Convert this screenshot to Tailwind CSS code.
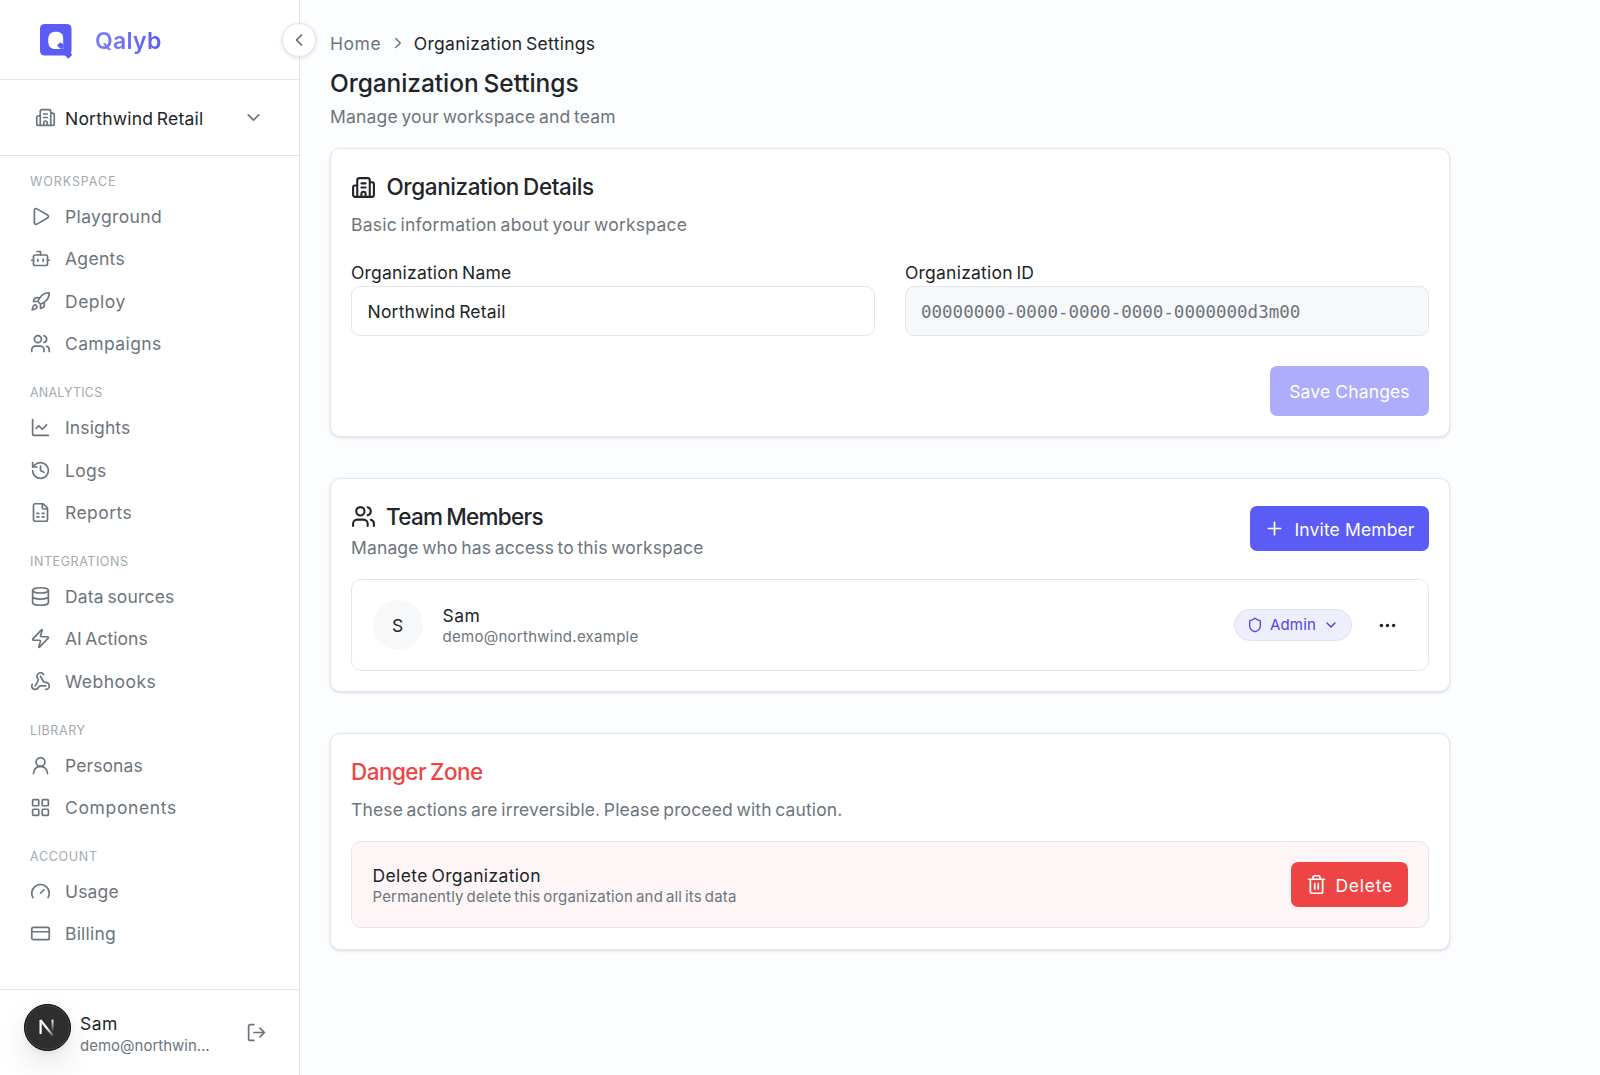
<!DOCTYPE html>
<html lang="en">
<head>
<meta charset="utf-8">
<title>Organization Settings</title>
<script src="https://cdn.jsdelivr.net/npm/@tailwindcss/browser@4"></script>
</head>
<body class="flex h-[1075px] overflow-hidden bg-[#fcfdfe] font-['Inter',sans-serif] text-[17.5px] leading-[26px] text-[#212529] [word-spacing:-1.5px]">

<!-- Sidebar -->
<aside class="relative flex w-[300px] shrink-0 flex-col border-r border-[#e4e6ee] bg-white">
  <div class="flex h-[80px] shrink-0 items-center border-b border-[#e4e6ee] pl-[39.5px]">
    <svg class="mt-[4px] h-[35px] w-[33px]" viewBox="0 0 33 35">
      <rect x="0" y="0" width="31.5" height="31.5" rx="4.5" fill="#5b5bf6"/>
      <path d="M15.700 7.700c5.200 0 7.500 2 7.500 7v10.300h-7.700c-5 0-7.300-2.600-7.300-8.500s2.300-8.800 7.500-8.800z" fill="#fff"/>
      <path d="M20.200 18.200l1.500 1.200 1.500.2v3.400l-1.200 2.500-1.800-1-3.200-3z" fill="#5b5bf6"/>
      <path d="M28.300 27.200l4 3.600-4 3.900-4-3.900z" fill="#5b5bf6"/>
    </svg>
    <span class="ml-[22.5px] mt-[2px] bg-gradient-to-r from-[#7d7df9] to-[#5b5bf6] bg-clip-text text-[23px] font-semibold leading-[32px] tracking-[0.3px] text-transparent">Qalyb</span>
    <button class="absolute left-[282px] top-[23px] flex size-[34px] items-center justify-center rounded-full border border-[#e4e6ee] bg-white pr-px text-[#5f6870] shadow-[0_1px_4px_rgba(0,0,0,0.14)]">
      <svg class="size-[20px] shrink-0" viewBox="0 0 24 24" fill="none" stroke="currentColor" stroke-width="2" stroke-linecap="round" stroke-linejoin="round"><path d="m15 18-6-6 6-6"/></svg>
    </button>
  </div>

  <div class="flex h-[76px] shrink-0 items-center border-b border-[#e4e6ee] pl-[34.5px] pr-[35px]">
    <svg class="size-[21px] text-[#6c757d]" viewBox="0 0 24 24" fill="none" stroke="currentColor" stroke-width="1.95" stroke-linecap="round" stroke-linejoin="round"><path d="M10 12h4M10 8h4M14 21v-3a2 2 0 0 0-4 0v3M6 10H4a2 2 0 0 0-2 2v7a2 2 0 0 0 2 2h16a2 2 0 0 0 2-2V9a2 2 0 0 0-2-2h-2M6 21V5a2 2 0 0 1 2-2h8a2 2 0 0 1 2 2v16"/></svg>
    <span class="ml-[9.5px] pt-[2px] tracking-[0.22px]">Northwind Retail</span>
    <svg class="ml-auto size-[21px] text-[#6c757d]" viewBox="0 0 24 24" fill="none" stroke="currentColor" stroke-width="1.95" stroke-linecap="round" stroke-linejoin="round"><path d="m6 9 6 6 6-6"/></svg>
  </div>

  <nav class="flex grow flex-col gap-[17px] pl-[29.5px] pt-[15px] text-[#6c757d]">
    <section>
      <h2 class="mb-[3.2px] pl-[0.5px] pt-px text-[12.5px] leading-[20px] tracking-[0.92px] text-[#a3a9af]">WORKSPACE</h2>
      <a class="flex h-[42.5px] items-center gap-[14.5px]"><svg class="size-[21px]" viewBox="0 0 24 24" fill="none" stroke="currentColor" stroke-width="1.95" stroke-linecap="round" stroke-linejoin="round"><path d="M5 5a2 2 0 0 1 3.008-1.728l11.997 6.998a2 2 0 0 1 .003 3.458l-12 7A2 2 0 0 1 5 19z"/></svg><span class="pt-px tracking-[0.37px]">Playground</span></a>
      <a class="flex h-[42.5px] items-center gap-[14.5px]"><svg class="size-[21px]" viewBox="0 0 24 24" fill="none" stroke="currentColor" stroke-width="1.95" stroke-linecap="round" stroke-linejoin="round"><path d="M12 8V4H8"/><rect width="16" height="12" x="4" y="8" rx="2"/><path d="M2 14h2M20 14h2M15 13v2M9 13v2"/></svg><span class="pt-px tracking-[0.3px]">Agents</span></a>
      <a class="flex h-[42.5px] items-center gap-[14.5px]"><svg class="size-[21px]" viewBox="0 0 24 24" fill="none" stroke="currentColor" stroke-width="1.95" stroke-linecap="round" stroke-linejoin="round"><path d="M4.5 16.5c-1.5 1.26-2 5-2 5s3.74-.5 5-2c.71-.84.7-2.13-.09-2.91a2.18 2.18 0 0 0-2.91-.09zM12 15l-3-3a22 22 0 0 1 2-3.95A12.88 12.88 0 0 1 22 2c0 2.72-.78 7.5-6 11a22.35 22.35 0 0 1-4 2zM9 12H4s.55-3.03 2-4c1.62-1.08 5 0 5 0M12 15v5s3.03-.55 4-2c1.08-1.62 0-5 0-5"/></svg><span class="pt-px tracking-[0.5px]">Deploy</span></a>
      <a class="flex h-[42.5px] items-center gap-[14.5px]"><svg class="size-[21px]" viewBox="0 0 24 24" fill="none" stroke="currentColor" stroke-width="1.95" stroke-linecap="round" stroke-linejoin="round"><path d="M16 21v-2a4 4 0 0 0-4-4H6a4 4 0 0 0-4 4v2M22 21v-2a4 4 0 0 0-3-3.87M16 3.13a4 4 0 0 1 0 7.75"/><circle cx="9" cy="7" r="4"/></svg><span class="pt-px tracking-[0.38px]">Campaigns</span></a>
    </section>
    <section>
      <h2 class="mb-[3.2px] pl-[0.5px] pt-px text-[12.5px] leading-[20px] tracking-[0.2px] text-[#a3a9af]">ANALYTICS</h2>
      <a class="flex h-[42.5px] items-center gap-[14.5px]"><svg class="size-[21px]" viewBox="0 0 24 24" fill="none" stroke="currentColor" stroke-width="1.95" stroke-linecap="round" stroke-linejoin="round"><path d="M3 3v16a2 2 0 0 0 2 2h16M19 9l-5 5-4-4-3 3"/></svg><span class="pt-px tracking-[0.13px]">Insights</span></a>
      <a class="flex h-[42.5px] items-center gap-[14.5px]"><svg class="size-[21px]" viewBox="0 0 24 24" fill="none" stroke="currentColor" stroke-width="1.95" stroke-linecap="round" stroke-linejoin="round"><path d="M3 12a9 9 0 1 0 9-9 9.75 9.75 0 0 0-6.74 2.74L3 8M3 3v5h5M12 7v5l4 2"/></svg><span class="pt-px tracking-[0.3px]">Logs</span></a>
      <a class="flex h-[42.5px] items-center gap-[14.5px]"><svg class="size-[21px]" viewBox="0 0 24 24" fill="none" stroke="currentColor" stroke-width="1.95" stroke-linecap="round" stroke-linejoin="round"><path d="M15 2H6a2 2 0 0 0-2 2v16a2 2 0 0 0 2 2h12a2 2 0 0 0 2-2V7zM14 2v4a2 2 0 0 0 2 2h4M8 13h2M14 13h2M8 17h2M14 17h2"/></svg><span class="pt-px tracking-[0.45px]">Reports</span></a>
    </section>
    <section>
      <h2 class="mb-[3.2px] pl-[0.5px] pt-px text-[12.5px] leading-[20px] tracking-[0.57px] text-[#a3a9af]">INTEGRATIONS</h2>
      <a class="flex h-[42.5px] items-center gap-[14.5px]"><svg class="size-[21px]" viewBox="0 0 24 24" fill="none" stroke="currentColor" stroke-width="1.95" stroke-linecap="round" stroke-linejoin="round"><ellipse cx="12" cy="5" rx="9" ry="3"/><path d="M3 5v14a9 3 0 0 0 18 0V5M3 12a9 3 0 0 0 18 0"/></svg><span class="pt-px tracking-[0.18px]">Data sources</span></a>
      <a class="flex h-[42.5px] items-center gap-[14.5px]"><svg class="size-[21px]" viewBox="0 0 24 24" fill="none" stroke="currentColor" stroke-width="1.95" stroke-linecap="round" stroke-linejoin="round"><path d="M4 14a1 1 0 0 1-.78-1.63l9.9-10.2a.5.5 0 0 1 .86.46l-1.92 6.02A1 1 0 0 0 13 10h7a1 1 0 0 1 .78 1.63l-9.9 10.2a.5.5 0 0 1-.86-.46l1.92-6.02A1 1 0 0 0 11 14z"/></svg><span class="pt-px tracking-[0.05px]">AI Actions</span></a>
      <a class="flex h-[42.5px] items-center gap-[14.5px]"><svg class="size-[21px]" viewBox="0 0 24 24" fill="none" stroke="currentColor" stroke-width="1.95" stroke-linecap="round" stroke-linejoin="round"><path d="M18 16.98h-5.99c-1.1 0-1.95.94-2.48 1.9A4 4 0 0 1 2 17c.01-.7.2-1.4.57-2M6 17l3.13-5.78c.53-.97.1-2.18-.5-3.1a4 4 0 1 1 6.89-4.06M12 6l3.13 5.73C15.66 12.7 16.9 13 18 13a4 4 0 0 1 0 8"/></svg><span class="pt-px tracking-[0.47px]">Webhooks</span></a>
    </section>
    <section>
      <h2 class="mb-[3.2px] pl-[0.5px] pt-px text-[12.5px] leading-[20px] tracking-[0.58px] text-[#a3a9af]">LIBRARY</h2>
      <a class="flex h-[42.5px] items-center gap-[14.5px]"><svg class="size-[21px]" viewBox="0 0 24 24" fill="none" stroke="currentColor" stroke-width="1.95" stroke-linecap="round" stroke-linejoin="round"><circle cx="12" cy="8" r="5"/><path d="M20 21a8 8 0 0 0-16 0"/></svg><span class="pt-px tracking-[0.1px]">Personas</span></a>
      <a class="flex h-[42.5px] items-center gap-[14.5px]"><svg class="size-[21px]" viewBox="0 0 24 24" fill="none" stroke="currentColor" stroke-width="1.95" stroke-linecap="round" stroke-linejoin="round"><rect width="7" height="7" x="3" y="3" rx="1"/><rect width="7" height="7" x="14" y="3" rx="1"/><rect width="7" height="7" x="14" y="14" rx="1"/><rect width="7" height="7" x="3" y="14" rx="1"/></svg><span class="pt-px tracking-[0.64px]">Components</span></a>
    </section>
    <section>
      <h2 class="mb-[3.2px] pl-[0.5px] pt-px text-[12.5px] leading-[20px] tracking-[0.71px] text-[#a3a9af]">ACCOUNT</h2>
      <a class="flex h-[42.5px] items-center gap-[14.5px]"><svg class="size-[21px]" viewBox="0 0 24 24" fill="none" stroke="currentColor" stroke-width="1.95" stroke-linecap="round" stroke-linejoin="round"><path d="m12 14 4-4M3.34 19a10 10 0 1 1 17.32 0"/></svg><span class="pt-px tracking-[0.17px]">Usage</span></a>
      <a class="flex h-[42.5px] items-center gap-[14.5px]"><svg class="size-[21px]" viewBox="0 0 24 24" fill="none" stroke="currentColor" stroke-width="1.95" stroke-linecap="round" stroke-linejoin="round"><rect width="20" height="14" x="2" y="5" rx="2"/><path d="M2 10h20"/></svg><span class="pt-px tracking-[0.21px]">Billing</span></a>
    </section>
  </nav>

  <div class="flex h-[86px] shrink-0 items-start border-t border-[#e4e6ee] pl-[23.5px] pr-[32px] pt-[13.5px]">
    <div class="flex size-[47.5px] shrink-0 items-center justify-center rounded-full border border-black bg-[#2e2e2e] shadow-[inset_0_0_0_1px_#484848,0_14px_28px_4px_rgba(0,0,0,0.07),0_3px_6px_rgba(0,0,0,0.06)]">
      <svg class="size-[18px]" viewBox="0 0 18 18" fill="none" stroke-width="2.2">
        <defs>
          <linearGradient id="stem" x1="0" y1="0" x2="0" y2="1"><stop offset="0" stop-color="#fff"/><stop offset="1" stop-color="#fff" stop-opacity="0.1"/></linearGradient>
          <linearGradient id="slash" gradientUnits="userSpaceOnUse" x1="9" y1="10" x2="15" y2="18"><stop offset="0" stop-color="#fff"/><stop offset="1" stop-color="#fff" stop-opacity="0.2"/></linearGradient>
        </defs>
        <path d="M2.6 16V2" stroke="#fff"/><path d="M2.4 2l12.300 15.500" stroke="url(#slash)"/><path d="M13.600 1.600h1.900v11.400h-1.900z" fill="url(#stem)"/>
      </svg>
    </div>
    <div class="ml-[9px] mt-[8px]">
      <div class="leading-[24px] tracking-[0.47px]">Sam</div>
      <div class="text-[15px] leading-[20px] text-[#6c757d]">demo@northwin…</div>
    </div>
    <svg class="ml-auto mt-[18px] size-[21px] text-[#6c757d]" viewBox="0 0 24 24" fill="none" stroke="currentColor" stroke-width="1.95" stroke-linecap="round" stroke-linejoin="round"><path d="m16 17 5-5-5-5M21 12H9M9 21H5a2 2 0 0 1-2-2V5a2 2 0 0 1 2-2h4"/></svg>
  </div>
</aside>

<!-- Page content -->
<main class="flex w-[1150px] flex-col pl-[30px] pt-[31px]">
  <div class="flex items-center">
    <span class="tracking-[0.55px] text-[#6c757d]">Home</span>
    <svg class="ml-[8px] mr-[6.5px] size-[18px] -translate-y-px text-[#6c757d]" viewBox="0 0 24 24" fill="none" stroke="currentColor" stroke-width="2" stroke-linecap="round" stroke-linejoin="round"><path d="m9 18 6-6-6-6"/></svg>
    <span class="tracking-[0.29px]">Organization Settings</span>
  </div>
  <h1 class="mt-[10px] text-[24.5px] font-medium leading-[33px] tracking-[-0.07px]">Organization Settings</h1>
  <p class="mt-[4px] tracking-[0.18px] text-[#6c757d]">Manage your workspace and team</p>

  <div class="mt-[18px] flex flex-col gap-[41px]">
    <section class="h-[289px] rounded-[10px] border border-[#e4e6ee] bg-white px-[20px] shadow-[0_1px_3px_rgba(0,0,0,0.14)]">
      <div class="mt-[22px] flex h-[32px] items-center">
        <svg class="size-[25px]" viewBox="0 0 24 24" fill="none" stroke="currentColor" stroke-width="2" stroke-linecap="round" stroke-linejoin="round"><path d="M10 12h4M10 8h4M14 21v-3a2 2 0 0 0-4 0v3M6 10H4a2 2 0 0 0-2 2v7a2 2 0 0 0 2 2h16a2 2 0 0 0 2-2V9a2 2 0 0 0-2-2h-2M6 21V5a2 2 0 0 1 2-2h8a2 2 0 0 1 2 2v16"/></svg>
        <h2 class="ml-[10.5px] text-[22.5px] font-medium tracking-[-0.4px]">Organization Details</h2>
      </div>
      <p class="mt-[9px] tracking-[0.23px] text-[#6c757d]">Basic information about your workspace</p>
      <div class="mt-[22px] grid grid-cols-2 gap-[30px]">
        <div>
          <label class="block tracking-[0.2px]">Organization Name</label>
          <div class="flex h-[50px] items-center rounded-[9px] border border-[#e4e6ee] bg-white px-[15.5px] pt-[2px] tracking-[0.2px]">Northwind Retail</div>
        </div>
        <div>
          <label class="block tracking-[0.22px]">Organization ID</label>
          <div class="flex h-[50px] items-center rounded-[9px] border border-[#e4e6ee] bg-[#f7f8fa] px-[15px] pt-px font-['DejaVu_Sans_Mono',monospace] text-[17.5px] text-[#6c757d]">00000000-0000-0000-0000-0000000d3m00</div>
        </div>
      </div>
      <div class="mt-[30px] flex justify-end">
        <button class="h-[50px] w-[159px] rounded-[7px] bg-[#adadfb] pt-[2px] tracking-[0.13px] text-white">Save Changes</button>
      </div>
    </section>

    <section class="h-[214px] rounded-[10px] border border-[#e4e6ee] bg-white px-[20px] shadow-[0_1px_3px_rgba(0,0,0,0.14)]">
      <div class="mt-[21px] flex justify-between">
        <div>
          <div class="flex h-[32px] items-center">
            <svg class="size-[25px]" viewBox="0 0 24 24" fill="none" stroke="currentColor" stroke-width="2" stroke-linecap="round" stroke-linejoin="round"><path d="M16 21v-2a4 4 0 0 0-4-4H6a4 4 0 0 0-4 4v2M22 21v-2a4 4 0 0 0-3-3.87M16 3.13a4 4 0 0 1 0 7.75"/><circle cx="9" cy="7" r="4"/></svg>
            <h2 class="ml-[10px] pt-[2px] text-[22.5px] font-medium tracking-[-0.7px]">Team Members</h2>
          </div>
          <p class="mt-[3px] tracking-[0.14px] text-[#6c757d]">Manage who has access to this workspace</p>
        </div>
        <button class="mt-[6px] flex h-[45px] w-[179px] items-center rounded-[7px] bg-[#5b5bf6] pl-[14px] text-white">
          <svg class="size-[21px]" viewBox="0 0 24 24" fill="none" stroke="currentColor" stroke-width="1.95" stroke-linecap="round" stroke-linejoin="round"><path d="M5 12h14M12 5v14"/></svg>
          <span class="ml-[9.5px] pt-[2px] tracking-[0.13px]">Invite Member</span>
        </button>
      </div>
      <div class="mt-[18px] flex h-[92px] items-center rounded-[10px] border border-[#e4e6ee] pl-[20.5px] pr-[30.5px]">
        <div class="flex size-[50px] items-center justify-center rounded-full bg-[#f7f8fa] pt-[2px]">S</div>
        <div class="ml-[20px]">
          <div class="leading-[23px] tracking-[0.47px]">Sam</div>
          <div class="text-[15px] leading-[20px] tracking-[0.27px] text-[#6c757d]">demo@northwind.example</div>
        </div>
        <div class="ml-auto flex h-[32px] w-[118px] items-center rounded-full border border-[#dfe2f1] bg-[#eeeefd] pl-[12px] text-[15px] text-[#5046e5]">
          <svg class="size-[16px]" viewBox="0 0 24 24" fill="none" stroke="currentColor" stroke-width="2" stroke-linecap="round" stroke-linejoin="round"><path d="M20 13c0 5-3.5 7.5-7.66 8.95a1 1 0 0 1-.67-.01C7.5 20.5 4 18 4 13V6a1 1 0 0 1 1-1c2 0 4.5-1.2 6.24-2.72a1.17 1.17 0 0 1 1.52 0C14.51 3.81 17 5 19 5a1 1 0 0 1 1 1z"/></svg>
          <span class="ml-[7px] tracking-[0.17px]">Admin</span>
          <svg class="ml-[7px] size-[16px]" viewBox="0 0 24 24" fill="none" stroke="currentColor" stroke-width="2.2" stroke-linecap="round" stroke-linejoin="round"><path d="m6 9 6 6 6-6"/></svg>
        </div>
        <svg class="ml-[24.5px] size-[21px]" viewBox="0 0 24 24" fill="currentColor"><circle cx="5" cy="12" r="2"/><circle cx="12" cy="12" r="2"/><circle cx="19" cy="12" r="2"/></svg>
      </div>
    </section>

    <section class="h-[217px] rounded-[10px] border border-[#e4e6ee] bg-white px-[20px] shadow-[0_1px_3px_rgba(0,0,0,0.14)]">
      <h2 class="mt-[22px] text-[22.5px] font-medium leading-[32px] tracking-[-0.55px] text-[#ef4444]">Danger Zone</h2>
      <p class="mt-[9px] tracking-[0.14px] text-[#6c757d]">These actions are irreversible. Please proceed with caution.</p>
      <div class="mt-[18px] flex h-[87px] items-center justify-between rounded-[10px] border border-[#e4e6ee] bg-[#fef5f6] px-[20.5px]">
        <div class="pt-[2px]">
          <div class="leading-[22px] tracking-[0.36px]">Delete Organization</div>
          <div class="text-[15px] leading-[20px] tracking-[0.18px] text-[#6c757d]">Permanently delete this organization and all its data</div>
        </div>
        <button class="flex h-[45px] w-[116.5px] items-center rounded-[7px] bg-[#ef4444] pl-[14.5px] text-white">
          <svg class="size-[21px]" viewBox="0 0 24 24" fill="none" stroke="currentColor" stroke-width="1.95" stroke-linecap="round" stroke-linejoin="round"><path d="M10 11v6M14 11v6M19 6v14a2 2 0 0 1-2 2H7a2 2 0 0 1-2-2V6M3 6h18M8 6V4a2 2 0 0 1 2-2h4a2 2 0 0 1 2 2v2"/></svg>
          <span class="ml-[9px] pt-[2px] tracking-[0.73px]">Delete</span>
        </button>
      </div>
    </section>
  </div>
</main>
</body>
</html>
